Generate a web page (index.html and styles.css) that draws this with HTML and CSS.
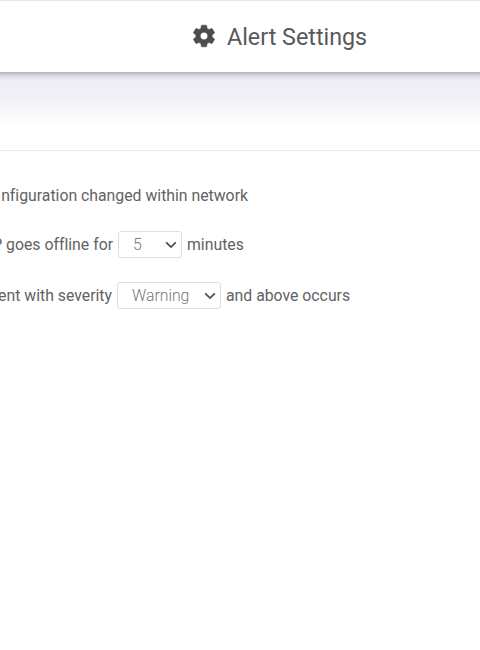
FILE: index.html
```html
<!DOCTYPE html>
<html lang="en">
<head>
    <meta charset="UTF-8">
    <title>Alert Settings</title>
    <link rel="stylesheet" href="styles.css">
</head>
<body>
<div class="header">
    <svg class="gear" viewBox="0 0 24 24">
        <path d="M19.43 12.98c.04-.32.07-.64.07-.98s-.03-.66-.07-.98l2.11-1.65c.19-.15.24-.42.12-.64l-2-3.46c-.12-.22-.39-.3-.61-.22l-2.49 1c-.52-.4-1.08-.73-1.69-.98l-.38-2.65C14.46 2.18 14.25 2 14 2h-4c-.25 0-.46.18-.49.42l-.38 2.65c-.61.25-1.17.59-1.69.98l-2.49-1c-.23-.09-.49 0-.61.22l-2 3.46c-.13.22-.07.49.12.64l2.11 1.65c-.04.32-.07.65-.07.98s.03.66.07.98l-2.11 1.65c-.19.15-.24.42-.12.64l2 3.46c.12.22.39.3.61.22l2.49-1c.52.4 1.08.73 1.69.98l.38 2.65c.03.24.24.42.49.42h4c.25 0 .46-.18.49-.42l.38-2.65c.61-.25 1.17-.59 1.69-.98l2.49 1c.23.09.49 0 .61-.22l2-3.46c.12-.22.07-.49-.12-.64l-2.11-1.65zM12 15.5c-1.93 0-3.5-1.57-3.5-3.5s1.57-3.5 3.5-3.5 3.5 1.57 3.5 3.5-1.57 3.5-3.5 3.5z"/>
    </svg>
    <h1>Alert Settings</h1>
</div>
<div class="banner"></div>
<div class="alerts">
    <div class="alert_row">
        <span class="lead config">nfiguration changed within network</span>
    </div>
    <div class="alert_row">
        <span class="lead offline">P goes offline for</span>
        <div class="select minutes">
            <span>5</span>
            <svg class="arrow" viewBox="0 0 12 8"><path d="M1.2 1.3L6 6.1l4.8-4.8"/></svg>
        </div>
        <span>minutes</span>
    </div>
    <div class="alert_row">
        <span class="lead severity">ent with severity</span>
        <div class="select level">
            <span>Warning</span>
            <svg class="arrow" viewBox="0 0 12 8"><path d="M1.2 1.3L6 6.1l4.8-4.8"/></svg>
        </div>
        <span>and above occurs</span>
    </div>
</div>
</body>
</html>
```

FILE: styles.css
```css
body {
    margin: 0;
    overflow: hidden;
    background: #fff;
    color: #626264;
    font-family: Roboto, sans-serif;
    font-size: 15.8px;
    font-variant-ligatures: none;
}

.header {
    position: relative;
    box-sizing: border-box;
    display: flex;
    align-items: center;
    height: 72px;
    margin: 0 -10px;
    padding-left: 201px;
    border-top: 1px solid #e6e6e6;
    background: #fff;
    box-shadow: 0 2px 6px rgba(0, 0, 0, 0.32);
}

.gear {
    width: 26px;
    height: 26px;
    margin: 0 10px 2px 0;
    fill: #4d4d4f;
    stroke: #4d4d4f;
    stroke-width: 0.5;
}

h1 {
    margin: 0;
    font-size: 23.3px;
    font-weight: 400;
    line-height: 28px;
    color: #58585a;
}

.banner {
    height: 78px;
    border-bottom: 1px solid #e8e8ea;
    background: linear-gradient(#eeedf4, #f1f0f7 30%, #fff 72%);
}

.alerts {
    padding-top: 20px;
}

.alert_row {
    display: flex;
    align-items: center;
    height: 51px;
    white-space: nowrap;
}

.alert_row:first-child {
    height: 48px;
}

.lead {
    display: flex;
    justify-content: flex-end;
}

.config {
    width: 248px;
}

.offline {
    width: 113px;
}

.severity {
    width: 112px;
}

.select {
    box-sizing: border-box;
    display: flex;
    align-items: center;
    justify-content: space-between;
    height: 27px;
    margin: 0 5px;
    padding: 0 4px 0 14px;
    border: 1px solid #dedee0;
    border-radius: 3px;
    color: #78787c;
    font-weight: 300;
}

.minutes {
    width: 64px;
}

.level {
    width: 104px;
}

.arrow {
    width: 12px;
    height: 8px;
    fill: none;
    stroke: #4d4d4f;
    stroke-width: 1.7;
}
```
